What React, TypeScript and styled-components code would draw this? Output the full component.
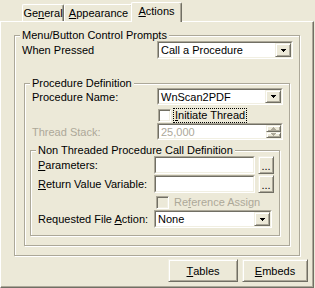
import styled, { createGlobalStyle } from "styled-components";

// classic XP "Windows Classic" palette
const face = "#ece9d8";
const light = "#f1efe2";
const shadow = "#aca899";
const dark = "#716f64";
const grayText = "#aca899";

const GlobalStyle = createGlobalStyle`
  html, body { margin: 0; padding: 0; background: ${face}; }
  body {
    font-family: "Liberation Sans", Arial, sans-serif;
    font-size: 11px;
    color: #000;
  }
`;

const Window = styled.div`
  width: 315px;
  height: 288px;
  overflow: hidden;
  background: ${face};
`;

const TabStrip = styled.div`
  display: flex;
  align-items: flex-end;
  height: 21px;
  padding-left: 22px;
  position: relative;
  z-index: 1;
`;

const Tab = styled.div<{ $active?: boolean; $w: number }>`
  box-sizing: border-box;
  width: ${(p) => p.$w}px;
  height: ${(p) => (p.$active ? 20 : 17)}px;
  margin: ${(p) => (p.$active ? "0 -2px -1px -2px" : "0")};
  background: ${face};
  border-top: 1px solid #fff;
  border-left: 1px solid #fff;
  border-right: 1px solid ${dark};
  box-shadow: inset -1px 0 0 ${shadow};
  border-radius: 2px 2px 0 0;
  display: flex;
  align-items: center;
  justify-content: center;
  padding-bottom: ${(p) => (p.$active ? 3 : 1)}px;
  white-space: nowrap;
  position: relative;
  z-index: ${(p) => (p.$active ? 2 : 1)};
`;

const Panel = styled.div`
  box-sizing: border-box;
  width: 314px;
  height: 267px;
  border-top: 1px solid #fff;
  border-left: 1px solid #fff;
  border-right: 1px solid ${dark};
  border-bottom: 1px solid ${dark};
  box-shadow: inset -1px -1px 0 ${shadow};
  padding: 13px 0 0 13px;
`;

const Group = styled.div<{ $w: number; $ml?: number; $mt?: number; $pb: number }>`
  box-sizing: border-box;
  width: ${(p) => p.$w}px;
  margin-left: ${(p) => p.$ml ?? 0}px;
  margin-top: ${(p) => p.$mt ?? 0}px;
  border: 1px solid ${shadow};
  box-shadow: inset 1px 1px 0 #fff, 1px 1px 0 #fff;
  padding: 0 0 ${(p) => p.$pb}px 7px;
`;

const Caption = styled.div`
  display: table;
  margin: -7px 0 0 -2px;
  padding: 0 2px;
  height: 13px;
  line-height: 13px;
  background: ${face};
  white-space: nowrap;
`;

const Row = styled.div<{ $mt: number; $h: number }>`
  display: flex;
  align-items: center;
  margin-top: ${(p) => p.$mt}px;
  height: ${(p) => p.$h}px;
`;

const Label = styled.div<{ $w: number; $disabled?: boolean }>`
  width: ${(p) => p.$w}px;
  flex: none;
  white-space: nowrap;
  color: ${(p) => (p.$disabled ? grayText : "#000")};
`;

const U = styled.span`
  text-decoration: underline;
  text-underline-offset: 1px;
`;

const Sunken = styled.div<{ $w: number; $h: number }>`
  box-sizing: border-box;
  width: ${(p) => p.$w}px;
  height: ${(p) => p.$h}px;
  flex: none;
  border: 1px solid;
  border-color: ${shadow} #fff #fff ${shadow};
`;

const SunkenInner = styled.div<{ $bg?: string }>`
  box-sizing: border-box;
  height: 100%;
  display: flex;
  border: 1px solid;
  border-color: ${dark} ${light} ${light} ${dark};
  background: ${(p) => p.$bg ?? "#fff"};
`;

const FieldText = styled.div<{ $disabled?: boolean }>`
  flex: 1;
  display: flex;
  align-items: center;
  padding-left: 2px;
  white-space: nowrap;
  overflow: hidden;
  color: ${(p) => (p.$disabled ? grayText : "#000")};
`;

const Raised = styled.div`
  box-sizing: border-box;
  background: ${face};
  border: 1px solid;
  border-color: ${light} ${dark} ${dark} ${light};
  box-shadow: inset 1px 1px 0 #fff, inset -1px -1px 0 ${shadow};
  display: flex;
  align-items: center;
  justify-content: center;
`;

const DropButton = styled(Raised)`
  width: 16px;
  flex: none;
`;

const SpinColumn = styled.div`
  width: 15px;
  flex: none;
  display: flex;
  flex-direction: column;
`;

const SpinHalf = styled(Raised)`
  flex: 1;
`;

const SmallButton = styled(Raised)<{ $h: number }>`
  width: 16px;
  height: ${(p) => p.$h}px;
  margin-left: 3px;
  align-items: flex-end;
  padding-bottom: 3px;
  line-height: 8px;
  font-size: 11px;
  flex: none;
`;

const CheckRow = styled.div`
  display: flex;
  align-items: center;
`;

const CheckBox = styled.div<{ $disabled?: boolean }>`
  box-sizing: border-box;
  width: 13px;
  height: 13px;
  flex: none;
  border: 1px solid;
  border-color: ${shadow} #fff #fff ${shadow};
  box-shadow: inset 1px 1px 0 ${dark}, inset -1px -1px 0 ${light};
  background: ${(p) => (p.$disabled ? face : "#fff")};
`;

const CheckText = styled.span<{ $focus?: boolean; $disabled?: boolean }>`
  margin-left: ${(p) => (p.$focus ? 2 : 3)}px;
  padding: 0 1px;
  line-height: 13px;
  white-space: nowrap;
  border: 1px dotted ${(p) => (p.$focus ? "#000" : "transparent")};
  color: ${(p) => (p.$disabled ? grayText : "#000")};
`;

const ButtonBar = styled.div`
  display: flex;
  justify-content: flex-end;
  gap: 4px;
  margin-top: 3px;
  padding-right: 5px;
`;

const PushButton = styled(Raised)<{ $w: number }>`
  width: ${(p) => p.$w}px;
  height: 23px;
`;

const Arrow = ({ up, color = "#000" }: { up?: boolean; color?: string }) => (
  <svg width="5" height="3" viewBox="0 0 5 3" shapeRendering="crispEdges">
    <g fill={color} transform={up ? "translate(0 3) scale(1 -1)" : undefined}>
      <rect x="0" y="0" width="5" height="1" />
      <rect x="1" y="1" width="3" height="1" />
      <rect x="2" y="2" width="1" height="1" />
    </g>
  </svg>
);

const Combo = ({ value, w, h }: { value: string; w: number; h: number }) => (
  <Sunken $w={w} $h={h}>
    <SunkenInner>
      <FieldText>{value}</FieldText>
      <DropButton>
        <Arrow />
      </DropButton>
    </SunkenInner>
  </Sunken>
);

const Edit = ({ w, h }: { w: number; h: number }) => (
  <Sunken $w={w} $h={h}>
    <SunkenInner />
  </Sunken>
);

export default function App() {
  return (
    <Window>
      <GlobalStyle />
      <TabStrip>
        <Tab $w={42}>
          Ge<U>n</U>eral
        </Tab>
        <Tab $w={69}>
          <U>A</U>ppearance
        </Tab>
        <Tab $w={51} $active>
          <U>A</U>ctions
        </Tab>
      </TabStrip>
      <Panel>
        <Group $w={286} $pb={9}>
          <Caption>Menu/Button Control Prompts</Caption>
          <Row $mt={-1} $h={18}>
            <Label $w={135}>When Pressed</Label>
            <Combo value="Call a Procedure" w={136} h={18} />
          </Row>

          <Group $w={266} $ml={2} $mt={24} $pb={9}>
            <Caption>Procedure Definition</Caption>
            <Row $mt={-2} $h={17}>
              <Label $w={125}>Procedure Name:</Label>
              <Combo value="WnScan2PDF" w={126} h={17} />
            </Row>
            <Row $mt={4} $h={13}>
              <Label $w={126} />
              <CheckRow>
                <CheckBox />
                <CheckText $focus>
                  <U>I</U>nitiate Thread
                </CheckText>
              </CheckRow>
            </Row>
            <Row $mt={1} $h={17}>
              <Label $w={125} $disabled>
                Thread Stack:
              </Label>
              <Sunken $w={126} $h={17}>
                <SunkenInner>
                  <FieldText $disabled>25,000</FieldText>
                  <SpinColumn>
                    <SpinHalf>
                      <Arrow up color={grayText} />
                    </SpinHalf>
                    <SpinHalf>
                      <Arrow color={grayText} />
                    </SpinHalf>
                  </SpinColumn>
                </SunkenInner>
              </Sunken>
            </Row>

            <Group $w={250} $ml={-2} $mt={10} $pb={7}>
              <Caption>Non Threaded Procedure Call Definition</Caption>
              <Row $mt={-1} $h={18}>
                <Label $w={116}>
                  <U>P</U>arameters:
                </Label>
                <Edit w={101} h={18} />
                <SmallButton $h={18}>...</SmallButton>
              </Row>
              <Row $mt={1} $h={18}>
                <Label $w={116}>
                  <U>R</U>eturn Value Variable:
                </Label>
                <Edit w={101} h={18} />
                <SmallButton $h={18}>...</SmallButton>
              </Row>
              <Row $mt={3} $h={13}>
                <Label $w={118} />
                <CheckRow>
                  <CheckBox $disabled />
                  <CheckText $disabled>
                    Re<U>f</U>erence Assign
                  </CheckText>
                </CheckRow>
              </Row>
              <Row $mt={1} $h={18}>
                <Label $w={116}>
                  Requested File <U>A</U>ction:
                </Label>
                <Combo value="None" w={118} h={18} />
              </Row>
            </Group>
          </Group>
        </Group>

        <ButtonBar>
          <PushButton $w={70}>
            <U>T</U>ables
          </PushButton>
          <PushButton $w={66}>
            <U>E</U>mbeds
          </PushButton>
        </ButtonBar>
      </Panel>
    </Window>
  );
}
